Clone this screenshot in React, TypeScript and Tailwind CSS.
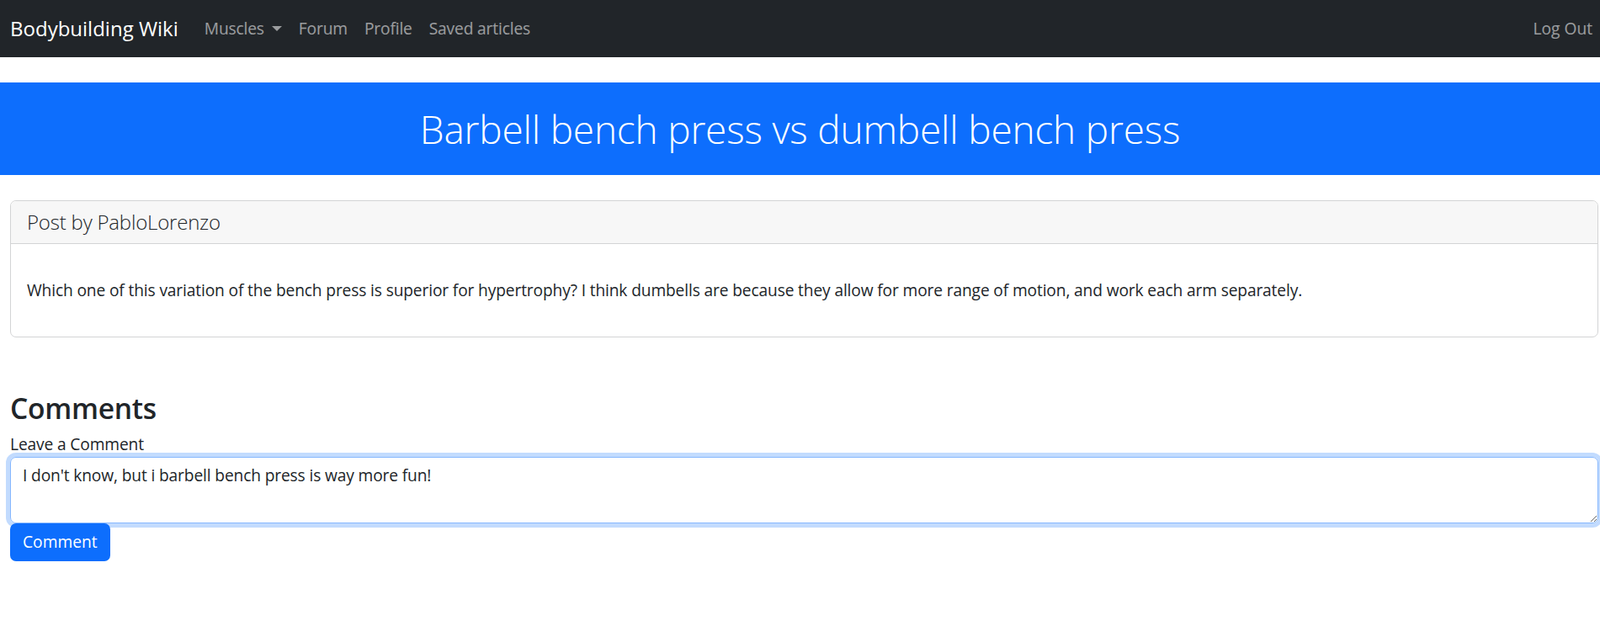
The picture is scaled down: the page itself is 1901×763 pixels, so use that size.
import { useState } from 'react'

const font = { fontFamily: '"Open Sans", "Noto Sans", sans-serif' }

function Navbar() {
    return (
        <nav className="h-[68px] bg-[#212529] flex items-center justify-between pl-[12px] pr-[9px]">
            <div className="flex items-center">
                <span className="text-white text-[24px] mr-[21px]">Bodybuilding Wiki</span>
                <div className="flex items-center text-[19.2px] text-white/55 tracking-[-0.15px]">
                    <span className="px-[10px] flex items-center">
                        Muscles
                        <span className="ml-[9px] w-0 h-0 border-l-[6px] border-r-[6px] border-t-[6px] border-l-transparent border-r-transparent border-t-white/55" />
                    </span>
                    <span className="px-[10px]">Forum</span>
                    <span className="px-[10px]">Profile</span>
                    <span className="px-[10px]">Saved articles</span>
                </div>
            </div>
            <span className="text-[19.2px] text-white/55">Log Out</span>
        </nav>
    )
}

export default function App() {
    const [comment, setComment] = useState("I don't know, but i barbell bench press is way more fun!")

    return (
        <div className="min-h-[763px] bg-white text-[#212529]" style={font}>
            <Navbar />

            {/* Banner */}
            <header className="mt-[30px] h-[110px] bg-[#0d6efd] flex items-center justify-center">
                <h1 className="text-white text-[46px] font-light tracking-[-0.2px]">Barbell bench press vs dumbell bench press</h1>
            </header>

            <main className="pl-[12px] pr-[2px]">
                {/* Post card */}
                <section className="mt-[30px] border border-[#d3d4d5] rounded-[7px] overflow-hidden">
                    <div className="h-[51px] bg-[#f7f7f7] border-b border-[#d3d4d5] px-[19px] flex items-center">
                        <h5 className="text-[24px] font-light tracking-[-0.2px]">Post by PabloLorenzo</h5>
                    </div>
                    <div className="px-[19px] h-[110px] flex items-center">
                        <p className="text-[19.2px] leading-[28.8px] tracking-[-0.14px]">
                            Which one of this variation of the bench press is superior for hypertrophy? I think dumbells are because they allow for more range of motion, and work each arm separately.
                        </p>
                    </div>
                </section>

                {/* Comments */}
                <section className="mt-[64px]">
                    <h3 className="text-[33.6px] font-semibold leading-[40px] mb-[9px] tracking-[-0.3px]">Comments</h3>
                    <label className="block text-[19.2px] leading-[28.8px] tracking-[-0.14px]">Leave a Comment</label>
                    <textarea
                        value={comment}
                        onChange={(e) => setComment(e.target.value)}
                        className="block w-full h-[79px] px-[14px] py-[7px] text-[19.2px] leading-[28.8px] tracking-[-0.14px] border border-[#86b7fe] rounded-[7px] outline-none shadow-[0_0_0_5px_rgba(13,110,253,0.25)]"
                    />
                    <button className="bg-[#0d6efd] text-white text-[19.2px] leading-[28.8px] px-[15px] py-[8px] rounded-[7px]">
                        Comment
                    </button>
                </section>
            </main>
        </div>
    )
}
